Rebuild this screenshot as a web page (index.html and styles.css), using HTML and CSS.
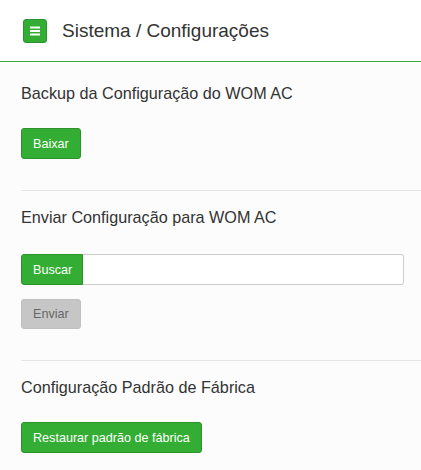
FILE: index.html
```html
<!DOCTYPE html>
<html lang="pt-BR">
<head>
	<meta charset="UTF-8">
	<title>Sistema / Configurações</title>
	<link rel="stylesheet" href="styles.css">
</head>
<body>
	<header class="topbar">
		<span class="menuBtn">
			<svg width="10" height="10" viewBox="0 0 10 10">
				<rect x="0" y="0.5" width="10" height="2" fill="#fff"/>
				<rect x="0" y="4" width="10" height="2" fill="#fff"/>
				<rect x="0" y="7.5" width="10" height="2" fill="#fff"/>
			</svg>
		</span>
		<h1 class="pageTitle">Sistema / Configurações</h1>
	</header>
	<div class="content">
		<section class="block first">
			<h2>Backup da Configuração do WOM AC</h2>
			<button class="btn green">Baixar</button>
		</section>
		<section class="block">
			<h2>Enviar Configuração para WOM AC</h2>
			<div class="fileGroup">
				<button class="btn green groupBtn">Buscar</button>
				<input type="text" class="fileName">
			</div>
			<button class="btn gray">Enviar</button>
		</section>
		<section class="block last">
			<h2>Configuração Padrão de Fábrica</h2>
			<button class="btn green">Restaurar padrão de fábrica</button>
		</section>
	</div>
</body>
</html>
```

FILE: styles.css
```css
body{
	margin: 0;
	background-color: #fcfcfc;
	font-family: "Liberation Sans", Arial, sans-serif;
	color: #333;
}
.topbar{
	height: 61px;
	background-color: #fff;
	border-bottom: 1px solid #3aa83a;
	display: flex;
	align-items: center;
	padding-left: 23px;
}
.menuBtn{
	width: 24px;
	height: 24px;
	box-sizing: border-box;
	background-color: #33ad33;
	border: 1px solid #2b952b;
	border-radius: 3px;
	display: flex;
	align-items: center;
	justify-content: center;
	margin-top: 1px;
}
.pageTitle{
	margin: 0 0 0 15px;
	font-size: 19px;
	font-weight: normal;
	color: #333;
}
.content{
	padding-left: 21px;
}
.block{
	border-bottom: 1px solid #e6e6e6;
	padding-top: 17px;
	padding-bottom: 31px;
}
.block.first{
	padding-top: 22px;
}
.block.last{
	border-bottom: none;
}
h2{
	margin: 0 0 26px 0;
	font-size: 16.2px;
	font-weight: normal;
	line-height: 18px;
	color: #333;
}
.btn{
	display: block;
	height: 31px;
	padding: 0 11px;
	font-family: "Liberation Sans", Arial, sans-serif;
	font-size: 12.6px;
	border-radius: 3px;
	cursor: pointer;
}
.green{
	background-color: #33ad33;
	border: 1px solid #2b952b;
	color: #fff;
}
.gray{
	height: 30px;
	background-color: #c6c6c6;
	border: 1px solid #c0c0c0;
	color: #666;
}
.fileGroup{
	display: flex;
	margin-right: 17px;
	margin-bottom: 14px;
	margin-top: 28px;
}
.groupBtn{
	border-radius: 3px 0 0 3px;
	width: 62px;
}
.fileName{
	flex: 1;
	height: 31px;
	box-sizing: border-box;
	border: 1px solid #ccc;
	border-left: none;
	border-radius: 0 3px 3px 0;
	background-color: #fff;
}
```
